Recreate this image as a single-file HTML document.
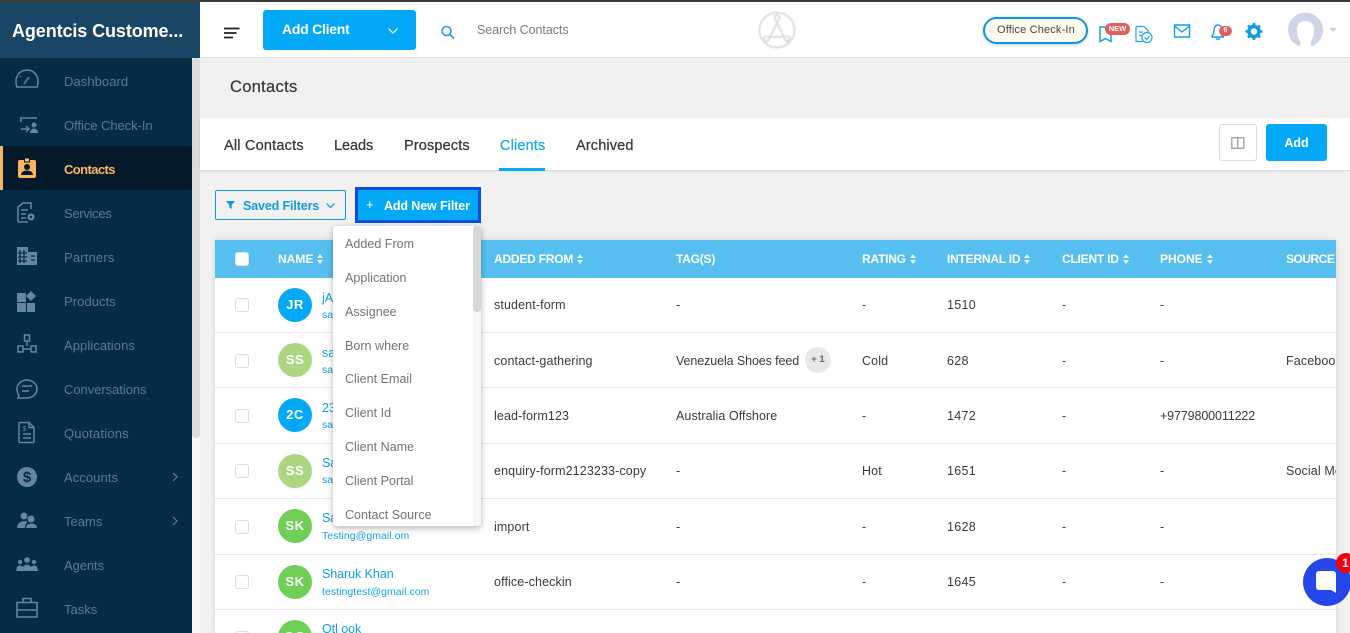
<!DOCTYPE html>
<html lang="en"><head><meta charset="utf-8"><title>Contacts</title>
<style>
*{box-sizing:border-box}
html,body{margin:0;padding:0;width:1350px;height:633px;overflow:hidden;background:#f1f1f1;font-family:"Liberation Sans",sans-serif;color:#333}
.a,.t{position:absolute}
.t{white-space:nowrap;line-height:16px;height:16px}
svg{position:absolute;overflow:visible}
#topline{left:0;top:0;width:1350px;height:2px;background:#3c3c3c;z-index:9}
#side{left:0;top:0;width:192px;height:633px;background:#052c47}
#brand{left:0;top:2px;width:200px;height:56px;background:#1a4666}
#brand span{position:absolute;left:12px;top:19px;color:#fff;font-size:18px;font-weight:700;line-height:20px;letter-spacing:-.1px;white-space:nowrap}
.n{left:64px;font-size:13px;color:#587a96;letter-spacing:.07px;font-weight:400}
.ic{fill:none;stroke:#66859f;stroke-width:1.5}
.if{fill:#66859f}
#hdr{left:200px;top:2px;width:1150px;height:56px;background:#fff;border-bottom:1px solid #e2e2e2}
#tabs{left:200px;top:118px;width:1150px;height:52px;background:#fff;box-shadow:0 1px 2px rgba(0,0,0,.12)}
.tab{top:137px;margin-top:1px;font-size:14.5px;color:#383838;letter-spacing:.15px;-webkit-text-stroke:.25px}
#table{left:215px;top:240px;width:1121px;height:393px;background:#fff;overflow:hidden;box-shadow:0 0 5px rgba(0,0,0,.14)}
#thead{left:0;top:0;width:1121px;height:38px;background:#57bff0}
.th{top:11px;color:#fff;font-size:12px;font-weight:700;letter-spacing:-.22px}
.th svg{position:relative;display:inline-block;width:6px;height:10px;margin-left:4px;top:1px;opacity:.85}
.ln{left:0;width:1121px;height:1px;background:#e8e8e8}
.cb{left:20px;width:14px;height:14px;border:1px solid #dcdcdc;border-radius:3px;background:#fff}
.av{left:63px;width:34px;height:34px;border-radius:50%;color:#fff;font-size:13px;font-weight:700;text-align:center;line-height:34px;letter-spacing:.6px}
.c{font-size:12.5px;color:#3a3a3a;letter-spacing:.12px;margin-top:1px}
.nm{left:107px;font-size:12.5px;color:#11a0e6;letter-spacing:-.06px;margin-top:1px}
.em{left:107px;font-size:10.5px;color:#11a0e6;letter-spacing:.05px;margin-top:1px}
#dd{left:333px;top:226px;width:148px;height:300px;background:#fff;border-radius:4px;box-shadow:0 2px 7px rgba(0,0,0,.3);overflow:hidden;z-index:5}
#dd .t{left:12px;font-size:12.5px;color:#737373;letter-spacing:.03px}
</style></head><body>
<svg width="0" height="0" style="left:0;top:0"><defs><g id="so"><path d="M3 0l3 4H0zM3 10L0 6h6z" fill="#fff"/></g></defs></svg>
<div class="a" id="topline"></div>

<div class="a" id="side"></div>
<div class="a" id="brand"><span>Agentcis Custome...</span></div>
<div class="a" style="left:192px;top:58px;width:8px;height:575px;background:#f6f6f6"></div>
<div class="a" style="left:192px;top:58px;width:8px;height:380px;background:#dcdcdc;border-radius:4px"></div>
<div class="a" style="left:0;top:146px;width:192px;height:44px;background:#04192a"></div>
<div class="a" style="left:0;top:146px;width:3px;height:44px;background:#fdb55f"></div>

<div class="t n" style="top:74px">Dashboard</div>
<div class="t n" style="top:118px;letter-spacing:-.05px">Office Check-In</div>
<div class="t n" style="top:162px;color:#fdb55f;font-weight:700;letter-spacing:-.6px">Contacts</div>
<div class="t n" style="top:206px;letter-spacing:-.3px">Services</div>
<div class="t n" style="top:250px;letter-spacing:.17px">Partners</div>
<div class="t n" style="top:294px">Products</div>
<div class="t n" style="top:338px">Applications</div>
<div class="t n" style="top:382px;letter-spacing:-.04px">Conversations</div>
<div class="t n" style="top:426px;letter-spacing:.2px">Quotations</div>
<div class="t n" style="top:470px">Accounts</div>
<div class="t n" style="top:514px;letter-spacing:.02px">Teams</div>
<div class="t n" style="top:558px;letter-spacing:-.08px">Agents</div>
<div class="t n" style="top:602px;letter-spacing:.02px">Tasks</div>

<svg width="192" height="633" style="left:0;top:0">
 <path class="ic" d="M17 87h20c1-2 1-4 1-6a11 11 0 0 0-22 0c0 2 0 4 1 6zM24 84l5-7M20 76l1 1"/>
 <path class="ic" d="M21 122v-4h16M21 129h8M26 126l3 3-3 3"/>
 <circle class="if" cx="34" cy="125" r="2.5"/><path class="if" d="M30 133c0-6 8-6 8 0z"/>
 <rect x="18" y="160" width="18" height="18" rx="2" fill="#fdb55f"/><rect x="24.500" y="158" width="5" height="4" fill="#fdb55f" stroke="#04192a"/>
 <circle cx="27" cy="167" r="3" fill="#04192a"/><path d="M21 175c0-6 12-6 12 0z" fill="#04192a"/>
 <path class="ic" d="M31 209v-6h-8l-5 4v14a1 1 0 0 0 1 1h9M21 210h7M21 214h5M21 218h5"/>
 <circle cx="31" cy="217" r="2.800" fill="#66859f" stroke="#66859f" stroke-width="1.500"/><circle cx="31" cy="217" r="1.200" fill="#052c47"/>
 <path class="if" d="M17 247h11v18H17zM28 252h9v13h-9z"/>
 <path stroke="#052c47" stroke-width="1.300" d="M20 250v13M24 250v13M18 253h9M18 257h9M18 261h9M31 256h4M31 260h4"/>
 <path class="if" d="M17 293h9v9h-9zM17 303h9v9h-9zM27 303h8v9h-8zM31 291l5 5-5 5-5-5z"/>
 <path class="ic" d="M24.500 335h5v6h-5zM18 346h5v6h-5zM31 346h5v6h-5zM27 341v5M23 349h8"/>
 <path class="ic" d="M18.500 395c-1-2-1.500-3-1.500-6a10 9 0 1 1 10 9l-9 0 1-2.500zM22 386h10M22 391h7" stroke-width="1.700"/>
 <path class="ic" d="M20 422.500h9l5 5v14a1 1 0 0 1-1 1H20a1 1 0 0 1-1-1v-18a1 1 0 0 1 1-1zM29 422.500v5h5M23 434h8M23 438h8"/>
 <text x="22.500" y="431" fill="#66859f" font-size="7" font-family="Liberation Sans">$</text>
 <circle class="if" cx="27" cy="477" r="10"/>
 <text x="27" y="482" text-anchor="middle" fill="#052c47" font-size="15" font-weight="700" font-family="Liberation Sans">$</text>
 <circle class="if" cx="31" cy="519" r="3.500"/><circle class="if" cx="24" cy="516" r="3.500"/>
 <path class="if" d="M17 528c0-7 8-8 11-6-2 1-3 3-3 6zM26 528c0-6 11-6 11 0z"/>
 <circle class="if" cx="27" cy="560" r="2.800"/><circle class="if" cx="20" cy="562" r="2.200"/><circle class="if" cx="34" cy="562" r="2.200"/>
 <path class="if" d="M16 571l1-4c1-2 5-2 6 0 1-3 7-3 8 0 1-2 5-2 6 0l1 4z"/>
 <path class="ic" d="M17 602.500h20v14.500H17zM23 602.500v-4h8v4M17 610h20"/>
 <path fill="none" stroke="#66859f" d="M173 473l4 4-4 4M173 517l4 4-4 4"/>
</svg>

<div class="a" id="hdr"></div>
<svg width="20" height="14" style="left:224px;top:27px"><path d="M0 1.500h15.500M0 6h12.500M0 10.500h9" stroke="#222" stroke-width="1.800" fill="none"/></svg>
<div class="a" style="left:263px;top:10px;width:153px;height:40px;background:#03a9f6;border-radius:3px"></div>
<div class="t" style="left:282px;top:21px;color:#fff;font-size:14px;font-weight:700;letter-spacing:-.25px">Add Client</div>
<svg width="10" height="6" style="left:388px;top:28px"><path d="M.5.500l4.500 4.500 4.500-4.500" stroke="#fff" stroke-width="1.200" fill="none"/></svg>
<svg width="15" height="15" style="left:441px;top:25px"><circle cx="5.500" cy="6" r="4.500" fill="none" stroke="#1d9fe0" stroke-width="1.500"/><path d="M9 9.500l4 4" stroke="#1d9fe0" stroke-width="1.800"/></svg>
<div class="t" style="left:477px;top:22px;font-size:12.5px;color:#7a7a7a;letter-spacing:-.06px">Search Contacts</div>

<svg width="40" height="40" style="left:757px;top:10px;filter:blur(.5px)" fill="none" stroke="#dedede" stroke-width="2"><circle cx="20" cy="20" r="17.500"/><path d="M20 5c-3 0-3 3-1 6l9 18c1 3 5 3 5 0s-3-3-5-2H12c-2-1-5-1-5 2s4 3 5 0l9-18c2-3 2-6-1-6z"/></svg>

<div class="a" style="left:983px;top:17px;width:105px;height:27px;border:2px solid #0a97dc;border-radius:14px;background:#fdfbef;box-shadow:0 1px 3px rgba(0,0,0,.2)"></div>
<div class="t" style="left:997px;top:22px;font-size:11px;color:#444;letter-spacing:.15px">Office Check-In</div>

<svg width="260" height="40" style="left:1095px;top:12px">
 <path d="M5 15v14.500l5.500-3 5.500 3V15z" fill="none" stroke="#11a0e6" stroke-width="1.500"/>
 <path d="M41 14.500h8l4 4v8M41 14.500v15h7M44 20h4M44 23.500h3" fill="none" stroke="#1da5e8" stroke-width="1.200"/>
 <circle cx="52" cy="25.500" r="5" fill="#fff" stroke="#1da5e8" stroke-width="1.200"/><path d="M49.500 25.500l2 2 3-3.500" fill="none" stroke="#1da5e8" stroke-width="1.200"/>
 <path d="M79.500 13h15v12h-15zM79.500 14l7.500 6 7.500-6" fill="none" stroke="#11a0e6" stroke-width="1.400"/>
 <path d="M117 24c2-2 2-4 2-6 0-3 2-5 4-5s3 1 4 3v8l2 1h-12zM121 27h4" fill="none" stroke="#11a0e6" stroke-width="1.400"/>
 <circle cx="159" cy="19.500" r="5" fill="none" stroke="#0c9be4" stroke-width="3.500"/>
 <path d="M159 11v3M159 25v3M150.500 19.500h3M164.500 19.500h3M153 13.500l2 2M163 23.500l2 2M153 25.500l2-2M163 15.500l2-2" stroke="#0c9be4" stroke-width="2.600"/>
</svg>
<div class="a" style="left:1105px;top:23px;width:25px;height:12px;border-radius:6px;background:#e1605f;color:#fff;font-size:7.500px;font-weight:700;text-align:center;line-height:11px">NEW</div>
<div class="a" style="left:1219px;top:26px;width:13px;height:10px;border-radius:5px;background:#e1605f;color:#fff;font-size:7px;font-weight:700;text-align:center;line-height:10px">6</div>

<svg width="36" height="36" style="left:1288px;top:12px"><defs><clipPath id="av"><circle cx="17.500" cy="18" r="17.500"/></clipPath></defs><circle cx="17.500" cy="18" r="17.500" fill="#cfd5e6"/><g clip-path="url(#av)"><path d="M10 36c3-2 3-5 1-9-2-3-2-6-2-10 0-5 4-8 8.500-8S26 12 26 17c0 4 0 7-2 10-2 4-2 7 1 9z" fill="#fff"/></g></svg>
<svg width="9" height="5" style="left:1329px;top:28px"><path d="M0 0h8l-4 4z" fill="#cfcfcf"/></svg>

<div class="t" style="left:230px;top:78px;font-size:16.500px;height:18px;line-height:18px;color:#3a3a3a;letter-spacing:.3px;-webkit-text-stroke:.25px">Contacts</div>

<div class="a" id="tabs"></div>
<div class="t tab" style="left:224px;letter-spacing:.2px">All Contacts</div>
<div class="t tab" style="left:334px;letter-spacing:-.05px">Leads</div>
<div class="t tab" style="left:404px">Prospects</div>
<div class="t tab" style="left:500px;color:#16a8f0">Clients</div>
<div class="t tab" style="left:576px">Archived</div>
<div class="a" style="left:499px;top:168px;width:46px;height:3px;background:#03aaf6"></div>
<div class="a" style="left:1219px;top:124px;width:38px;height:37px;border:1px solid #dcdcdc;border-radius:3px;background:#fff"></div>
<svg width="14" height="13" style="left:1231px;top:137px"><path d="M.75.750h12v10.500h-12zM6.750.750v10.500" fill="none" stroke="#aaa" stroke-width="1.500"/></svg>
<div class="a" style="left:1266px;top:124px;width:61px;height:37px;background:#03a9f6;border-radius:3px;color:#fff;font-size:12.500px;font-weight:700;text-align:center;line-height:39px">Add</div>

<div class="a" style="left:215px;top:190px;width:131px;height:30px;border:1px solid #119bdc;border-radius:2px"></div>
<svg width="10" height="9" style="left:226px;top:201px"><path d="M0 0h9L5.700 4v4L3.300 6.500V4z" fill="#119bdc"/></svg>
<div class="t" style="left:243px;top:198px;font-size:12.500px;font-weight:700;color:#119bdc;letter-spacing:-.13px">Saved Filters</div>
<svg width="10" height="6" style="left:326px;top:203px"><path d="M.5.500l4 4 4-4" fill="none" stroke="#119bdc" stroke-width="1.200"/></svg>
<div class="a" style="left:355px;top:187px;width:126px;height:36px;background:#03a9f6;border:3px solid #0a50e0"></div>
<div class="t" style="left:366px;top:197px;color:#fff;font-size:13px;font-weight:400">+</div>
<div class="t" style="left:384px;top:198px;color:#fff;font-size:12.500px;font-weight:700;letter-spacing:-.12px">Add New Filter</div>

<div class="a" id="table">
 <div class="a" id="thead"></div>
 <div class="a cb" style="top:12px;border-color:#e3e3e3"></div>
 <div class="t th" style="left:63px;letter-spacing:0">NAME<svg viewBox="0 0 6 10"><use href="#so"/></svg></div>
 <div class="t th" style="left:279px">ADDED FROM<svg viewBox="0 0 6 10"><use href="#so"/></svg></div>
 <div class="t th" style="left:461px">TAG(S)</div>
 <div class="t th" style="left:647px">RATING<svg viewBox="0 0 6 10"><use href="#so"/></svg></div>
 <div class="t th" style="left:732px">INTERNAL ID<svg viewBox="0 0 6 10"><use href="#so"/></svg></div>
 <div class="t th" style="left:847px">CLIENT ID<svg viewBox="0 0 6 10"><use href="#so"/></svg></div>
 <div class="t th" style="left:945px;letter-spacing:0">PHONE<svg viewBox="0 0 6 10"><use href="#so"/></svg></div>
 <div class="t th" style="left:1071px;letter-spacing:-.5px">SOURCE</div>

 <div class="a ln" style="top:92px"></div><div class="a ln" style="top:147px"></div><div class="a ln" style="top:203px"></div>
 <div class="a ln" style="top:258px"></div><div class="a ln" style="top:314px"></div><div class="a ln" style="top:369px"></div>

 <div class="a cb" style="top:58px"></div>
 <div class="a av" style="top:48px;background:#03a9f6">JR</div>
 <div class="t nm" style="top:49px">jA</div><div class="t em" style="top:66px">sa</div>
 <div class="t c" style="left:279px;top:56px">student-form</div>
 <div class="t c" style="left:461px;top:56px">-</div><div class="t c" style="left:647px;top:56px">-</div>
 <div class="t c" style="left:732px;top:56px;letter-spacing:.3px">1510</div><div class="t c" style="left:847px;top:56px">-</div><div class="t c" style="left:945px;top:56px">-</div>

 <div class="a cb" style="top:114px"></div>
 <div class="a av" style="top:103px;background:#aed581">SS</div>
 <div class="t nm" style="top:104px">sa</div><div class="t em" style="top:121px">sa</div>
 <div class="t c" style="left:279px;top:112px">contact-gathering</div>
 <div class="t c" style="left:461px;top:112px;letter-spacing:-.1px">Venezuela Shoes feed</div>
 <div class="a" style="left:590px;top:107px;width:26px;height:26px;border-radius:50%;background:#e8e8e8;color:#666;font-size:9.500px;font-weight:700;text-align:center;line-height:26px">+ 1</div>
 <div class="t c" style="left:647px;top:112px">Cold</div>
 <div class="t c" style="left:732px;top:112px;letter-spacing:.3px">628</div><div class="t c" style="left:847px;top:112px">-</div><div class="t c" style="left:945px;top:112px">-</div>
 <div class="t c" style="left:1071px;top:112px">Facebook</div>

 <div class="a cb" style="top:169px"></div>
 <div class="a av" style="top:158px;background:#03a9f6">2C</div>
 <div class="t nm" style="top:159px">23</div><div class="t em" style="top:176px">sa</div>
 <div class="t c" style="left:279px;top:167px">lead-form123</div>
 <div class="t c" style="left:461px;top:167px;letter-spacing:.08px">Australia Offshore</div>
 <div class="t c" style="left:647px;top:167px">-</div>
 <div class="t c" style="left:732px;top:167px;letter-spacing:.3px">1472</div><div class="t c" style="left:847px;top:167px">-</div><div class="t c" style="left:945px;top:167px;letter-spacing:-.12px">+9779800011222</div>

 <div class="a cb" style="top:224px"></div>
 <div class="a av" style="top:214px;background:#aed581">SS</div>
 <div class="t nm" style="top:214px">Sa</div><div class="t em" style="top:231px">sa</div>
 <div class="t c" style="left:279px;top:222px">enquiry-form2123233-copy</div>
 <div class="t c" style="left:461px;top:222px">-</div>
 <div class="t c" style="left:647px;top:222px">Hot</div>
 <div class="t c" style="left:732px;top:222px;letter-spacing:.3px">1651</div><div class="t c" style="left:847px;top:222px">-</div><div class="t c" style="left:945px;top:222px">-</div>
 <div class="t c" style="left:1071px;top:222px">Social Media</div>

 <div class="a cb" style="top:280px"></div>
 <div class="a av" style="top:269px;background:#6fcf56">SK</div>
 <div class="t nm" style="top:269px">Sa</div><div class="t em" style="top:287px">Testing@gmail.om</div>
 <div class="t c" style="left:279px;top:278px">import</div>
 <div class="t c" style="left:461px;top:278px">-</div><div class="t c" style="left:647px;top:278px">-</div>
 <div class="t c" style="left:732px;top:278px;letter-spacing:.3px">1628</div><div class="t c" style="left:847px;top:278px">-</div><div class="t c" style="left:945px;top:278px">-</div>

 <div class="a cb" style="top:335px"></div>
 <div class="a av" style="top:325px;background:#6fcf56">SK</div>
 <div class="t nm" style="top:325px">Sharuk Khan</div><div class="t em" style="top:343px">testingtest@gmail.com</div>
 <div class="t c" style="left:279px;top:333px">office-checkin</div>
 <div class="t c" style="left:461px;top:333px">-</div><div class="t c" style="left:647px;top:333px">-</div>
 <div class="t c" style="left:732px;top:333px;letter-spacing:.3px">1645</div><div class="t c" style="left:847px;top:333px">-</div><div class="t c" style="left:945px;top:333px">-</div>

 <div class="a cb" style="top:391px"></div>
 <div class="a av" style="top:380px;background:#6fcf56">OO</div>
 <div class="t nm" style="top:380px">Otl ook</div>
</div>

<div class="a" id="dd">
 <div class="t" style="top:10px">Added From</div>
 <div class="t" style="top:44px">Application</div>
 <div class="t" style="top:78px">Assignee</div>
 <div class="t" style="top:112px">Born where</div>
 <div class="t" style="top:145px">Client Email</div>
 <div class="t" style="top:179px">Client Id</div>
 <div class="t" style="top:213px">Client Name</div>
 <div class="t" style="top:247px">Client Portal</div>
 <div class="t" style="top:281px">Contact Source</div>
 <div class="a" style="left:140px;top:0;width:8px;height:300px;background:#f6f6f6"></div>
 <div class="a" style="left:140px;top:0;width:8px;height:86px;background:#d6d6d6;border-radius:4px"></div>
</div>

<div class="a" style="left:1303px;top:558px;width:48px;height:48px;border-radius:50%;background:#2546e8;z-index:6"></div>
<svg width="24" height="24" style="left:1315px;top:570px;z-index:7"><path d="M4 1h14a3 3 0 0 1 3 3v19l-5-3H4a3 3 0 0 1-3-3V4a3 3 0 0 1 3-3z" fill="#fff"/></svg>
<div class="a" style="left:1336px;top:553px;width:20px;height:20px;border-radius:50%;background:#f5000f;color:#fff;font-size:12px;font-weight:700;line-height:20px;padding-left:6px;z-index:8">1</div>
</body></html>
